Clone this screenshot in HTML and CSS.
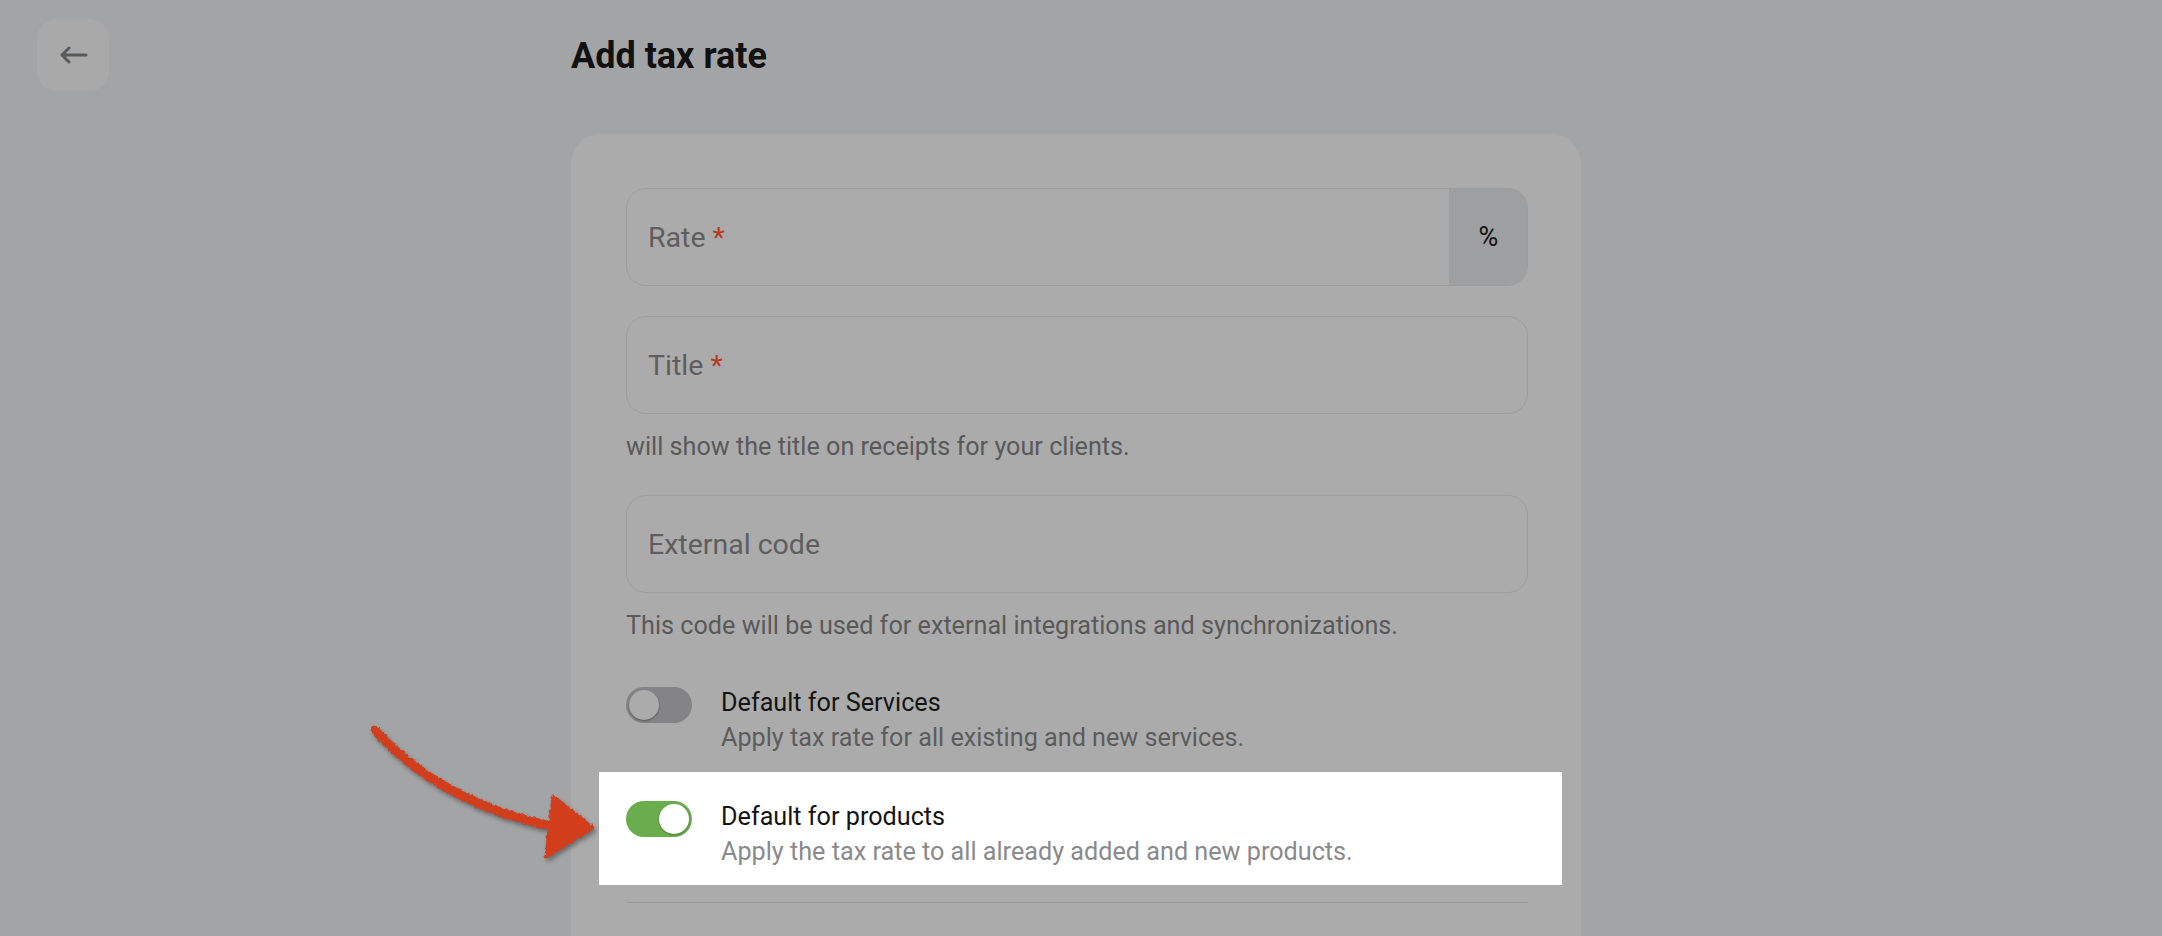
FILE: index.html
```html
<!DOCTYPE html>
<html lang="en">
<head>
<meta charset="utf-8">
<title>Add tax rate</title>
<link rel="stylesheet" href="styles.css">
</head>
<body>
<div class="page">
  <aside class="side">
    <button class="back" aria-label="Back">
      <svg width="29" height="18" viewBox="0 0 29 18" fill="none">
        <path d="M27 9H3M10 2L3 9L10 16" stroke="#58595b" stroke-width="3" stroke-linecap="round" stroke-linejoin="round"/>
      </svg>
    </button>
  </aside>
  <main class="main">
    <h1 class="title">Add tax rate</h1>
    <section class="card">
      <div class="field field-rate">
        <span class="field-label">Rate <span class="req">*</span></span>
        <span class="addon">%</span>
      </div>
      <div class="field field-title">
        <span class="field-label">Title <span class="req">*</span></span>
      </div>
      <p class="hint">will show the title on receipts for your clients.</p>
      <div class="field field-ext">
        <span class="field-label">External code</span>
      </div>
      <p class="hint">This code will be used for external integrations and synchronizations.</p>

      <div class="switch-row first">
        <span class="switch off"><span class="knob"></span></span>
        <div class="switch-text">
          <div class="switch-title">Default for Services</div>
          <div class="switch-desc">Apply tax rate for all existing and new services.</div>
        </div>
      </div>

      <div class="highlight">
        <div class="switch-row">
          <span class="switch on"><span class="knob"></span></span>
          <div class="switch-text">
            <div class="switch-title">Default for products</div>
            <div class="switch-desc light">Apply the tax rate to all already added and new products.</div>
          </div>
        </div>
      </div>
      <div class="divider"></div>
    </section>
  </main>
</div>

<svg class="pointer" width="260" height="160" viewBox="0 0 260 160">
  <defs>
    <filter id="rough" x="-10%" y="-10%" width="120%" height="120%">
      <feTurbulence type="fractalNoise" baseFrequency="0.35" numOctaves="2" seed="3" result="noise"/>
      <feDisplacementMap in="SourceGraphic" in2="noise" scale="4" xChannelSelector="R" yChannelSelector="G"/>
    </filter>
  </defs>
  <g filter="url(#rough)">
    <path d="M15 20 C 50 60, 110 100, 192 116" stroke="#d23c1f" stroke-width="9" fill="none" stroke-linecap="round"/>
    <path d="M193 86 L233 118 L186 147 Z" fill="#d23c1f" stroke="#d23c1f" stroke-width="3" stroke-linejoin="round"/>
  </g>
</svg>
</body>
</html>
```
FILE: styles.css
```css
html, body {
  margin: 0;
  padding: 0;
  height: 100%;
}
body {
  background: #a3a4a6;
  font-family: Roboto, "Liberation Sans", Arial, sans-serif;
  overflow: hidden;
  position: relative;
}
.page {
  display: flex;
  padding: 19px 0 0 37px;
}
.side {
  flex: none;
  width: 534px;
}
.back {
  width: 72px;
  height: 72px;
  border: none;
  border-radius: 20px;
  background: #a9a9aa;
  display: flex;
  align-items: center;
  justify-content: center;
  padding: 0;
  cursor: pointer;
}
.main {
  flex: none;
  width: 1010px;
}
.title {
  margin: 15px 0 56px;
  font-size: 36px;
  line-height: 44px;
  font-weight: 700;
  color: #111;
}
.card {
  background: #ababab;
  border-radius: 30px 30px 0 0;
  padding: 54px 53px 0 55px;
  min-height: 900px;
}
.field {
  box-sizing: border-box;
  height: 98px;
  border: 1px solid #9d9d9d;
  border-radius: 20px;
  display: flex;
  align-items: center;
  overflow: hidden;
}
.field-rate {
  margin-bottom: 30px;
}
.field-ext {
  margin-top: 32px;
}
.field-label {
  flex: 1;
  padding-left: 21px;
  font-size: 28.5px;
  color: #5e5e5f;
}
.req {
  color: #b63b22;
}
.addon {
  flex: none;
  align-self: stretch;
  width: 79px;
  background: #9e9fa1;
  display: flex;
  align-items: center;
  justify-content: center;
  font-size: 27px;
  color: #111;
  margin: -1px -1px -1px 0;
}
.hint {
  margin: 17px 0 0;
  font-size: 25.2px;
  line-height: 32px;
  color: #59595a;
}
.switch-row {
  display: flex;
  align-items: flex-start;
}
.switch-row.first {
  margin-top: 44px;
}
.switch {
  flex: none;
  position: relative;
  width: 66px;
  height: 36px;
  border-radius: 18px;
  margin-top: 1px;
  box-sizing: border-box;
}
.switch.off {
  background: #848486;
}
.switch.on {
  background: #6aad4e;
}
.knob {
  position: absolute;
  top: 3px;
  width: 30px;
  height: 30px;
  border-radius: 50%;
}
.switch.off .knob {
  left: 3px;
  background: #ababab;
  box-shadow: 0 1px 2px rgba(0,0,0,.35);
}
.switch.on .knob {
  right: 3px;
  background: #fff;
  box-shadow: 0 1px 2px rgba(0,0,0,.3);
}
.switch-text {
  margin-left: 29px;
}
.switch-title {
  font-size: 25.2px;
  line-height: 34px;
  color: #141414;
}
.switch-desc {
  font-size: 25.2px;
  line-height: 35px;
  color: #5c5c5d;
}
.switch-desc.light {
  color: #8a8a8a;
}
.highlight {
  background: #fff;
  margin: 17px -34px 0 -27px;
  padding: 28px 34px 16px 27px;
}
.divider {
  margin-top: 17px;
  border-top: 1px solid #999a9b;
}
.pointer {
  position: absolute;
  left: 360px;
  top: 710px;
  filter: drop-shadow(2px 3px 2px rgba(0,0,0,.35));
}
```
